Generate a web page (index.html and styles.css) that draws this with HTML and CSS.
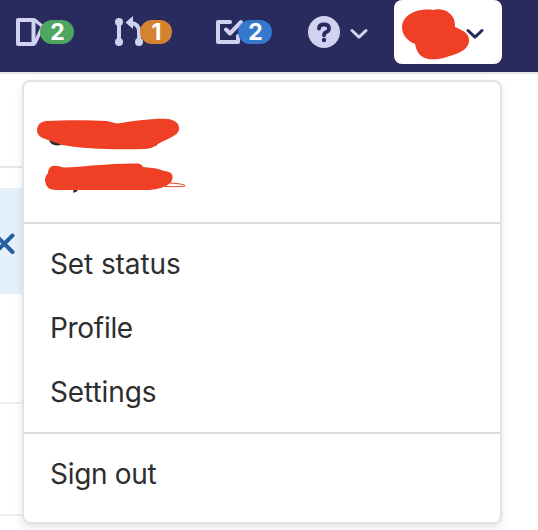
FILE: index.html
```html
<!DOCTYPE html>
<html lang="en">
<head>
<meta charset="utf-8">
<title>User menu</title>
<link rel="stylesheet" href="styles.css">
</head>
<body>
<header class="navbar">
  <a class="nav-item issues">
    <svg width="28" height="32" viewBox="0 0 28 32" fill="none" stroke="currentColor" stroke-width="4" stroke-linejoin="round">
      <path d="M2 4H17.500V28H2Z"/>
      <path d="M18 3.500L26 10M18.500 28L26 12" stroke-width="3.500"/>
    </svg>
    <span class="badge green">2</span>
  </a>
  <a class="nav-item merges">
    <svg width="30" height="32" viewBox="0 0 30 32" fill="currentColor">
      <circle cx="5" cy="6" r="4"/><circle cx="5" cy="26" r="4"/><circle cx="25" cy="26" r="4"/>
      <path d="M5 6V26M25 26V15Q25 8 17 7" fill="none" stroke="currentColor" stroke-width="4"/>
      <path d="M11.500 6.500L19 0V13Z"/>
    </svg>
    <span class="badge orange">1</span>
  </a>
  <a class="nav-item todos">
    <svg width="30" height="32" viewBox="0 0 30 32" fill="none" stroke="currentColor" stroke-width="4" stroke-linecap="round" stroke-linejoin="round">
      <path d="M14 6H2V26H22V20"/>
      <path d="M10 13.500L14 17.500L25 6"/>
    </svg>
    <span class="badge blue">2</span>
  </a>
  <a class="nav-item help">
    <svg width="32" height="32" viewBox="0 0 32 32">
      <circle cx="16" cy="16" r="16" fill="currentColor"/>
      <path d="M11 12.500Q11 8.500 16 8.500Q21 8.500 21 12.500Q21 15 18 16.300Q16 17.200 16 19.300" fill="none" stroke="#292b5e" stroke-width="3.800" stroke-linecap="round"/>
      <circle cx="16" cy="24" r="2.200" fill="#292b5e"/>
    </svg>
    <svg class="chevron" width="18" height="12" viewBox="0 0 18 12"><path d="M2 2.500L9 9.200L16 2.500"/></svg>
  </a>
  <a class="user-toggle">
    <svg width="70" height="60" viewBox="0 0 70 60"><path fill="#ef4026" d="M31 10C41 7 53 13 53 25V27C60 30 68 33 67 42C65 53 49 55 42 58C27 61 16 60 13 44C4 40 0 34 0 27C1 14 16 8 31 10Z"/></svg>
    <svg class="chevron" width="18" height="12" viewBox="0 0 18 12"><path d="M2 2.500L9 9.200L16 2.500"/></svg>
  </a>
</header>
<main class="page">
  <div class="page-row first"></div>
  <div class="page-row notice">
    <svg width="16" height="22" viewBox="0 0 16 22"><path d="M-4 2.500L12.500 19M-4 19L12.500 2.500"/></svg>
  </div>
  <div class="page-row third"></div>
  <div class="page-row fourth"></div>
  <nav class="menu">
    <div class="account">
      <svg width="476" height="140" viewBox="0 0 476 140">
        <path fill="#2d2d33" d="M25 58Q27 65 37 63V58ZM130 57H133V63.500H129ZM32 106Q38 109.500 42 107ZM50 106L54 107Q53 111 49 110.500Z"/>
        <path fill="#ef4026" d="M22 39C40 38 65 38 83 39Q88 40 93 41.500C110 39 130 36 144 37Q156 39 155 48C154 54 140 58 134 62Q129 67 119 67C91 68 61 67 38 63Q30 60 24 58Q12 55 13 47Q14 40 22 39Z"/>
        <path fill="#ef4026" d="M28 84Q34 83 39 85.500C60 85 86 81 114 81.500Q118 82 119 85Q135 86 140 89Q151 90 148 98Q145 106 125 108H34Q22 109 21 99Q21 94 24 91Q24 86 28 84Z"/>
        <path fill="none" stroke="#ef4026" d="M146 101Q162 102 161 104Q158 105 141 104.500"/>
      </svg>
    </div>
    <ul class="menu-group">
      <li><span class="set-status">Set status</span></li>
      <li><span class="profile">Profile</span></li>
      <li><span class="settings">Settings</span></li>
    </ul>
    <ul class="menu-group">
      <li><span class="sign-out">Sign out</span></li>
    </ul>
  </nav>
</main>
</body>
</html>
```
FILE: styles.css
```css
* { box-sizing: border-box; }
body {
  margin: 0;
  height: 530px;
  overflow: hidden;
  background: #fff;
  color: #2e2e2e;
  font-family: Inter, "Liberation Sans", sans-serif;
}
svg { display: block; flex: none; }
.navbar {
  display: grid;
  grid-template-columns: 98px 102px 92px 86px 108px;
  height: 74px;
  padding-left: 16px;
  background: #292b5e;
  border-bottom: 2px solid #e5e5e5;
  color: #d1d1f0;
}
.nav-item { display: flex; align-items: center; height: 64px; }
.badge {
  position: relative;
  width: 34px;
  height: 24px;
  padding-left: 1px;
  border-radius: 12px;
  color: #fff;
  font-size: 23px;
  font-weight: 700;
  line-height: 24px;
  text-align: center;
}
.green { margin-left: -4px; background: #4fa65e; }
.orange { width: 32px; margin-left: -4px; background: #d38431; }
.blue { margin-left: -8px; background: #3579cd; }
.chevron {
  fill: none;
  stroke: currentColor;
  stroke-width: 3;
  stroke-linecap: round;
  stroke-linejoin: round;
}
.help .chevron { margin: 3px 0 0 10px; }
.user-toggle {
  display: flex;
  height: 64px;
  padding-left: 8px;
  border-radius: 8px;
  background: #fff;
  color: #292b5e;
}
.user-toggle .chevron { margin: 28px 0 0 -6px; }
.page { position: relative; height: 456px; }
.page-row { border-bottom: 2px solid #e5e5e5; }
.first { height: 94px; }
.notice {
  display: flex;
  align-items: center;
  width: 24px;
  height: 106px;
  margin-top: 20px;
  border: 0;
  background: #e4f0fa;
}
.notice path { fill: none; stroke: #235f9f; stroke-width: 4; stroke-linecap: round; }
.notice svg { margin-top: 6px; }
.page-row.first, .third, .fourth { width: 24px; }
.third { height: 110px; border-color: #eee; }
.fourth { height: 112px; border-color: #eee; }
.menu {
  position: absolute;
  top: 6px;
  left: 22px;
  width: 480px;
  height: 444px;
  border: 2px solid #e3e3e3;
  border-radius: 8px;
  background: #fff;
  box-shadow: 0 4px 8px rgba(0, 0, 0, .1);
}
.account { height: 140px; }
.menu-group {
  margin: 0;
  padding: 8px 26px;
  border-top: 2px solid #dcdcdc;
  list-style: none;
  font-size: 28px;
}
.menu-group li { height: 64px; line-height: 65px; white-space: nowrap; }
.set-status { letter-spacing: -.1px; }
.profile, .sign-out { letter-spacing: -.3px; }
.settings { letter-spacing: -.1px; }
```
